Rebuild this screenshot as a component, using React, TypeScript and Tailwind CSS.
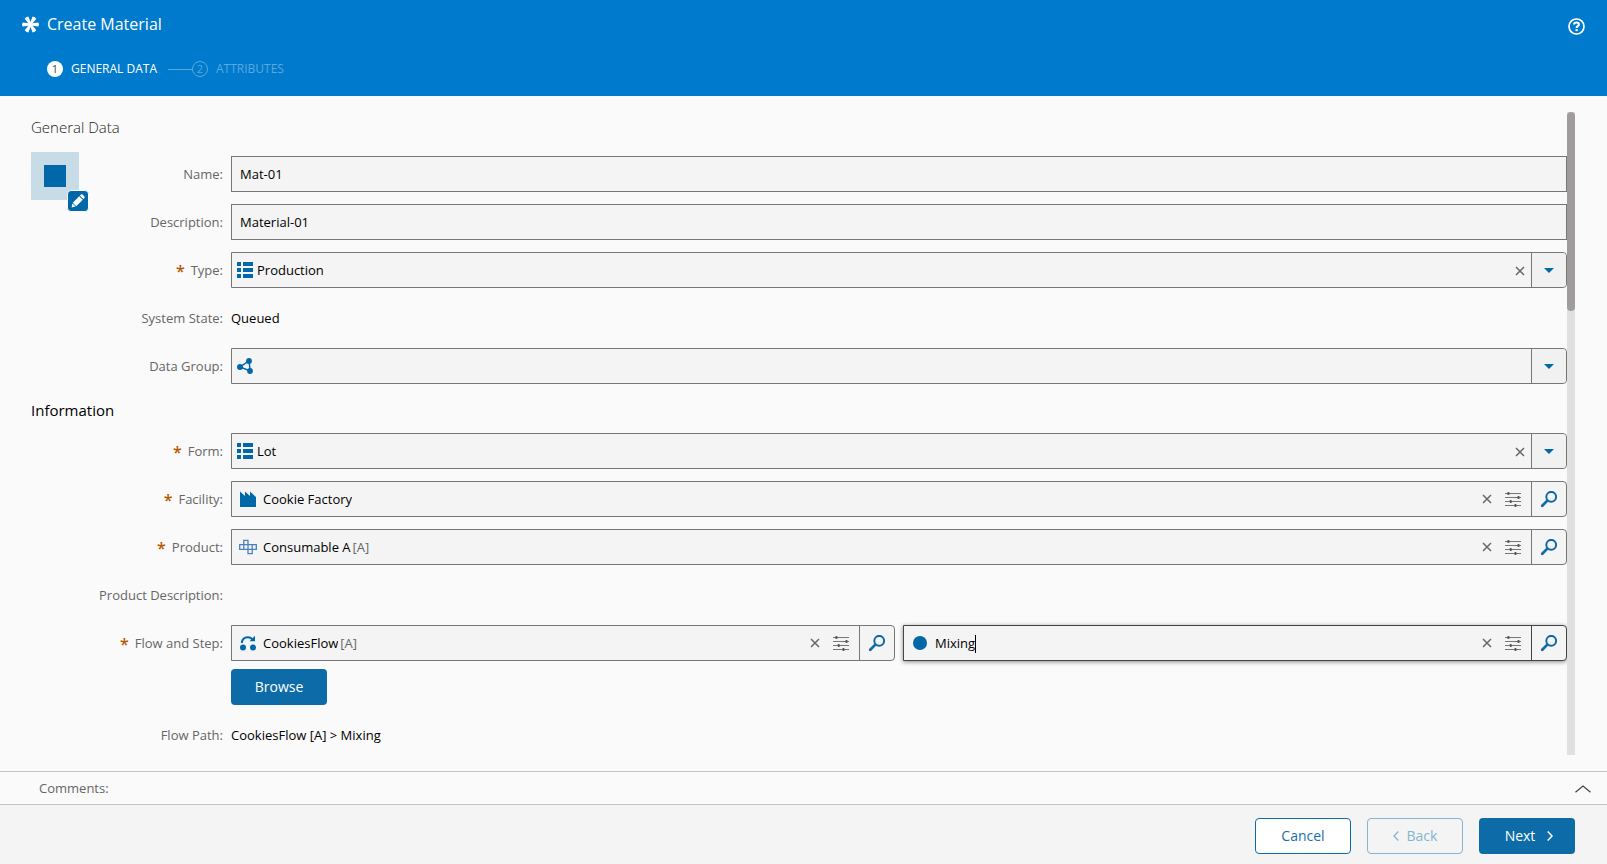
import { useState } from 'react'
import type { ReactNode } from 'react'
import clsx from 'clsx'

interface IconProps {
  className?: string
}

function AsteriskIcon() {
  return (
    <svg viewBox="0 0 17 17" className="size-[17px]" fill="currentColor" aria-hidden="true">
      {[0, 60, 120, 180, 240, 300].map((angle) => (
        <path key={angle} d="M7.5 8.5 L6.4 0.6 L8.5 0 L10.6 0.6 L9.5 8.5 Z" transform={`rotate(${angle + 30} 8.5 8.5)`} />
      ))}
    </svg>
  )
}

function HelpIcon() {
  return (
    <svg viewBox="0 0 17 17" className="size-[17px]" fill="none" stroke="currentColor" aria-hidden="true">
      <circle cx="8.5" cy="8.5" r="7.5" strokeWidth="1.7" />
      <path d="M6.1 6.6C6.1 5.2 7.1 4.5 8.5 4.5S10.9 5.3 10.9 6.4C10.9 8 8.6 8 8.6 10" strokeWidth="2.1" />
      <path d="M7.5 12.1h2.2" strokeWidth="2" />
    </svg>
  )
}

function PencilIcon() {
  return (
    <svg viewBox="0 0 14 14" className="size-3.5" fill="currentColor" aria-hidden="true">
      <path d="M0.6 13.4 L1.4 9.4 L4.6 12.6 Z" />
      <path d="M1.8 8.8 L8.2 2.2 L11.8 5.8 L5.2 12.2 Z" />
      <path d="M8.9 1.6 L10 0.6 Q10.8 0 11.6 0.6 L13.4 2.4 Q14 3.2 13.4 4 L12.4 5.1 Z" />
    </svg>
  )
}

function ListIcon({ className }: IconProps) {
  return (
    <svg viewBox="0 0 16 16" className={className} fill="currentColor" aria-hidden="true">
      <path d="M0 0h4v4H0zM6 0h10v4H6zM0 6h4v4H0zM6 6h10v4H6zM0 12h4v4H0zM6 12h10v4H6z" />
    </svg>
  )
}

function ShareIcon({ className }: IconProps) {
  return (
    <svg viewBox="0 0 16 16" className={className} fill="currentColor" aria-hidden="true">
      <path d="M3 9 L12 2.8 L13.2 13 Z" fill="none" stroke="currentColor" strokeWidth="1.4" />
      <circle cx="3" cy="9" r="3" />
      <circle cx="12" cy="3" r="2.9" />
      <circle cx="13" cy="13" r="2.9" />
    </svg>
  )
}

function FactoryIcon({ className }: IconProps) {
  return (
    <svg viewBox="0 0 16 16" className={className} fill="currentColor" aria-hidden="true">
      <path d="M0 16V0.5L5 5V0.5L10 5V0.5L16 6V16Z" />
    </svg>
  )
}

function ProductIcon({ className }: IconProps) {
  return (
    <svg viewBox="0 0 18 16" className={className} fill="none" stroke="currentColor" strokeWidth="1.3" aria-hidden="true">
      <path d="M0.7 5.7h16.6v4.6H0.7zM4.8 10.3V1.3H9v13.4h4.2V5.7M9 1.3v4.4" />
    </svg>
  )
}

function FlowIcon({ className }: IconProps) {
  return (
    <svg viewBox="0 0 16 16" className={className} fill="currentColor" aria-hidden="true">
      <circle cx="3" cy="12.6" r="3" />
      <circle cx="13" cy="12.6" r="3" />
      <path d="M1.7 8C2.2 4.4 4.6 2.3 7.6 2.3C9.9 2.3 11.7 3.3 12.8 5" fill="none" stroke="currentColor" strokeWidth="2" />
      <path d="M15 0.8V6.2H9.6Z" />
    </svg>
  )
}

function StepIcon({ className }: IconProps) {
  return (
    <svg viewBox="0 0 16 16" className={className} fill="currentColor" aria-hidden="true">
      <circle cx="8" cy="8" r="7" />
    </svg>
  )
}

function SlidersIcon() {
  return (
    <svg viewBox="0 0 16 16" className="size-4" aria-hidden="true">
      <path d="M0 2.5h16M0 6.5h16M0 10.5h16M0 14.5h16" stroke="#767676" strokeWidth="1" />
      <path d="M2.5 1h1.8v3H2.5zM12.6 5h1.8v3h-1.8zM4.8 9h1.8v3H4.8zM9.6 13h1.8v3H9.6z" fill="#555555" />
    </svg>
  )
}

function SearchIcon() {
  return (
    <svg viewBox="0 0 16 16" className="size-4" fill="none" stroke="currentColor" aria-hidden="true">
      <circle cx="10.2" cy="5.8" r="4.9" strokeWidth="2" />
      <path d="M6.4 9.6L1.2 14.8" strokeWidth="2.7" strokeLinecap="round" />
    </svg>
  )
}

function CloseIcon() {
  return (
    <svg viewBox="0 0 10 10" className="size-2.5" fill="none" stroke="#666666" strokeWidth="1.5" aria-hidden="true">
      <path d="M1 1l8 8M9 1l-8 8" />
    </svg>
  )
}

function CaretIcon() {
  return (
    <svg viewBox="0 0 10 5" className="h-[5px] w-2.5" fill="currentColor" aria-hidden="true">
      <path d="M0 0h10L5 5z" />
    </svg>
  )
}

interface RowProps {
  label: string
  htmlFor?: string
  required?: boolean
  narrow?: boolean
  children?: ReactNode
}

function Row({ label, htmlFor, required, narrow, children }: RowProps) {
  const Tag = htmlFor ? 'label' : 'span'
  return (
    <div className="flex min-h-9">
      <Tag
        htmlFor={htmlFor}
        className={clsx(
          'flex h-9 shrink-0 items-center justify-end pt-0.5 pr-2 text-[13px] text-[#666666]',
          narrow ? 'w-36' : 'w-50'
        )}
      >
        {required && <span className="mr-1.5 text-base font-semibold text-[#b35900]">*</span>}
        {label}:
      </Tag>
      <div className="min-w-0 flex-1 text-[13px]">{children}</div>
    </div>
  )
}

function TextField({ id, defaultValue }: { id: string; defaultValue: string }) {
  return (
    <input
      id={id}
      type="text"
      defaultValue={defaultValue}
      className="block h-9 w-full border border-[#767676] bg-[#f4f4f4] px-2 text-[13px] outline-none"
    />
  )
}

interface SelectFieldProps {
  id: string
  icon: ReactNode
  options: string[]
  clearable?: boolean
}

function SelectField({ id, icon, options, clearable }: SelectFieldProps) {
  const [value, setValue] = useState(options[0])
  return (
    <div className="flex h-9 items-center rounded-r border border-[#767676] bg-[#f4f4f4] pl-[5px]">
      {icon}
      <select
        id={id}
        value={value}
        onChange={(e) => setValue(e.target.value)}
        className="h-full min-w-0 flex-1 appearance-none bg-transparent pt-px pl-1 outline-none"
      >
        {options.map((option) => (
          <option key={option}>{option}</option>
        ))}
      </select>
      {clearable && (
        <button type="button" aria-label="Clear" className="mt-0.5 mr-1.5 cursor-pointer">
          <CloseIcon />
        </button>
      )}
      <button
        type="button"
        aria-label="Open list"
        className="flex h-full w-[35px] cursor-pointer items-center justify-center rounded-r border-l border-[#767676] bg-[#f1f1f1] text-[#0067a8]"
      >
        <CaretIcon />
      </button>
    </div>
  )
}

interface LookupFieldProps {
  id: string
  icon: ReactNode
  value: string
  revision?: string
  active?: boolean
  label?: string
}

function LookupField({ id, icon, value, revision, active, label }: LookupFieldProps) {
  return (
    <div
      className={clsx(
        'flex h-9 min-w-0 flex-1 items-center rounded-r border bg-[#f4f4f4] pl-[7px]',
        active ? 'border-[#444444] shadow-[0_1px_4px_rgba(0,0,0,0.45)]' : 'border-[#767676]'
      )}
    >
      {icon}
      <div className="flex min-w-0 flex-1 items-center pt-px pl-1.5">
        <input id={id} type="text" defaultValue={value} aria-label={label} className="field-sizing-content bg-transparent outline-none" />
        {active && <span className="h-[18px] w-px bg-black" />}
        {revision && <span className="ml-0.5 text-[#666666]">[{revision}]</span>}
      </div>
      <button type="button" aria-label="Clear" className="mr-[13px] cursor-pointer">
        <CloseIcon />
      </button>
      <button type="button" aria-label="Filter" className="mr-2.5 cursor-pointer">
        <SlidersIcon />
      </button>
      <button
        type="button"
        aria-label="Search"
        className={clsx(
          'flex h-full w-[35px] cursor-pointer items-center justify-center rounded-r border-l text-[#0b6ca8]',
          active ? 'border-[#444444]' : 'border-[#767676]'
        )}
      >
        <SearchIcon />
      </button>
    </div>
  )
}

export default function App() {
  return (
    <div className="flex h-screen flex-col bg-[#fafafa] font-['Open_Sans','Noto_Sans',sans-serif] text-black">
      <header className="h-24 shrink-0 bg-[#007acc] text-white">
        <div className="flex h-12 items-center px-[22px]">
          <AsteriskIcon />
          <h1 className="ml-2 flex-1 text-base">Create Material</h1>
          <button type="button" aria-label="Help" className="mt-1 cursor-pointer">
            <HelpIcon />
          </button>
        </div>
        <ol className="flex h-[42px] items-center pl-[47px] text-xs">
          <li className="flex items-center">
            <span className="flex size-4 items-center justify-center rounded-full bg-white text-[11px] text-[#444444]">1</span>
            <span className="ml-2">GENERAL DATA</span>
          </li>
          <li className="ml-[11px] flex items-center text-[#58a9df]">
            <span className="h-px w-6 bg-[#58a9df]" />
            <span className="flex size-4 items-center justify-center rounded-full border border-[#58a9df] text-[11px]">2</span>
            <span className="ml-2">ATTRIBUTES</span>
          </li>
        </ol>
      </header>

      <main className="flex min-h-0 flex-1 py-4 pr-8 pl-[31px]">
        <div className="min-w-0 flex-1 overflow-hidden">
          <h2 className="mb-2.5 text-[15px] leading-[30px] font-light text-[#1a1a1a]">General Data</h2>
          <div className="flex">
            <div className="relative mr-2 flex size-12 items-center justify-center bg-[#c8dce8]">
              <span className="size-[22px] bg-[#0067a8]" />
              <button
                type="button"
                aria-label="Edit icon"
                className="absolute top-[38px] left-9 flex size-[22px] cursor-pointer items-center justify-center rounded-sm border border-[#fafafa] bg-[#0067a8] text-white"
              >
                <PencilIcon />
              </button>
            </div>
            <div className="flex min-w-0 flex-1 flex-col gap-3 pt-1">
              <Row label="Name" htmlFor="name" narrow>
                <TextField id="name" defaultValue="Mat-01" />
              </Row>
              <Row label="Description" htmlFor="description" narrow>
                <TextField id="description" defaultValue="Material-01" />
              </Row>
              <Row label="Type" htmlFor="type" required narrow>
                <SelectField id="type" icon={<ListIcon className="size-4 text-[#0067a8]" />} options={['Production']} clearable />
              </Row>
              <Row label="System State" narrow>
                <p className="leading-9">Queued</p>
              </Row>
              <Row label="Data Group" htmlFor="data-group" narrow>
                <SelectField id="data-group" icon={<ShareIcon className="size-4 text-[#0067a8]" />} options={['']} />
              </Row>
            </div>
          </div>

          <h2 className="mt-[11px] mb-2 text-[15px] leading-[30px]">Information</h2>
          <div className="flex flex-col gap-3">
            <Row label="Form" htmlFor="form" required>
              <SelectField id="form" icon={<ListIcon className="size-4 text-[#0067a8]" />} options={['Lot']} clearable />
            </Row>
            <Row label="Facility" htmlFor="facility" required>
              <LookupField id="facility" icon={<FactoryIcon className="h-4 w-[18px] text-[#0067a8]" />} value="Cookie Factory" />
            </Row>
            <Row label="Product" htmlFor="product" required>
              <LookupField id="product" icon={<ProductIcon className="h-4 w-[18px] text-[#4a80bd]" />} value="Consumable A" revision="A" />
            </Row>
            <Row label="Product Description" />
            <Row label="Flow and Step" htmlFor="flow" required>
              <div className="flex gap-2">
                <LookupField id="flow" icon={<FlowIcon className="h-4 w-[18px] text-[#0067a8]" />} value="CookiesFlow" revision="A" />
                <LookupField id="step" label="Step" icon={<StepIcon className="h-4 w-[18px] text-[#0067a8]" />} value="Mixing" active />
              </div>
              <button type="button" className="mt-2 h-9 w-24 cursor-pointer rounded bg-[#0d6ca8] text-sm text-white">
                Browse
              </button>
            </Row>
            <Row label="Flow Path">
              <p className="leading-9">CookiesFlow [A] &gt; Mixing</p>
            </Row>
          </div>
        </div>
        {/* Scrollbar */}
        <div className="w-2 shrink-0 bg-[#e0e0e0]">
          <div className="h-[31%] rounded-full bg-[#a09c9b]" />
        </div>
      </main>

      <button
        type="button"
        className="flex h-[34px] shrink-0 cursor-pointer items-center justify-between border-y border-[#c4c4c4] pt-px pr-4 pl-[39px] text-[13px] text-[#666666]"
      >
        Comments:
        <svg viewBox="0 0 16 8" className="h-2 w-4" fill="none" stroke="#444444" strokeWidth="1.2" aria-hidden="true">
          <path d="M0.5 7.3L8 1l7.5 6.3" />
        </svg>
      </button>

      <footer className="flex h-[59px] shrink-0 items-center justify-end gap-4 bg-[#f4f4f4] pt-0.5 pr-8 text-sm">
        <button type="button" className="h-9 w-24 cursor-pointer rounded border border-[#0d6ca8] bg-white text-[#1a6fa8]">
          Cancel
        </button>
        <button type="button" disabled className="flex h-9 w-24 items-center justify-center gap-2 rounded border border-[#86b4d3] text-[#86b4d3]">
          <svg viewBox="0 0 6 10" className="h-2.5 w-1.5" fill="none" stroke="currentColor" strokeWidth="1.3" aria-hidden="true">
            <path d="M5.3 0.5L1 5l4.3 4.5" />
          </svg>
          Back
        </button>
        <button type="button" className="flex h-9 w-24 cursor-pointer items-center justify-center gap-3 rounded bg-[#0d6ca8] pl-1 text-white">
          Next
          <svg viewBox="0 0 6 10" className="h-2.5 w-1.5" fill="none" stroke="currentColor" strokeWidth="1.5" aria-hidden="true">
            <path d="M0.7 0.5L5 5L0.7 9.5" />
          </svg>
        </button>
      </footer>
    </div>
  )
}
